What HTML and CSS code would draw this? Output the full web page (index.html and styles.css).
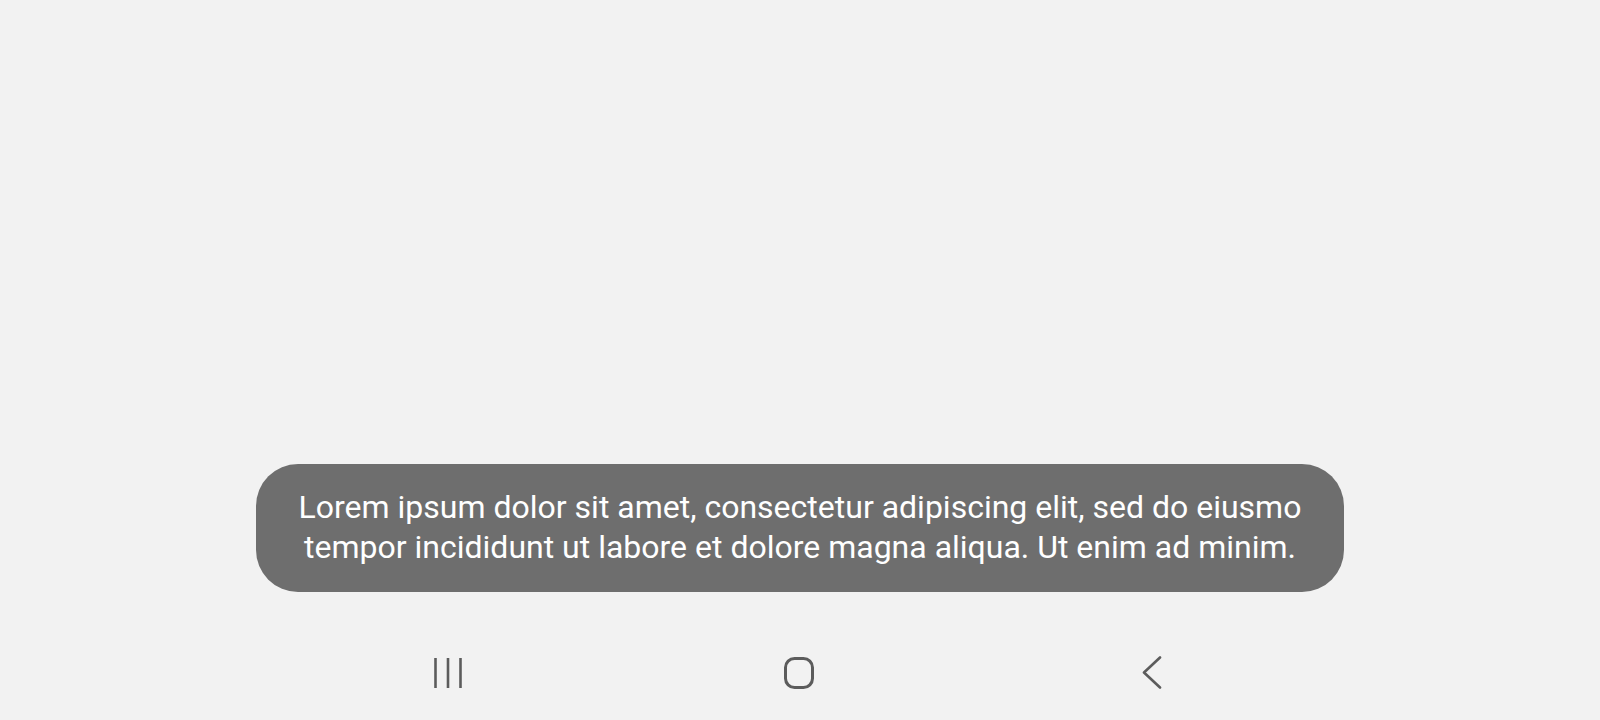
FILE: index.html
```html
<!DOCTYPE html>
<html lang="en">
<head>
<meta charset="utf-8">
<title>Toast</title>
<link rel="stylesheet" href="styles.css">
</head>
<body>
<div class="screen">
  <div class="content"></div>
  <div class="toast">
    <p class="toast-text">Lorem ipsum dolor sit amet, consectetur adipiscing elit, sed do eiusmo<br>tempor incididunt ut labore et dolore magna aliqua. Ut enim ad minim.</p>
  </div>
  <nav class="navbar">
    <div class="nav-cell">
      <svg class="icon" width="28" height="30" viewBox="0 0 28 30" aria-label="Recent apps">
        <line x1="1.5" y1="0" x2="1.5" y2="30"/>
        <line x1="14" y1="0" x2="14" y2="30"/>
        <line x1="26.5" y1="0" x2="26.5" y2="30"/>
      </svg>
    </div>
    <div class="nav-cell">
      <svg class="icon home" width="30" height="32" viewBox="0 0 30 32" aria-label="Home">
        <rect x="1.5" y="1.5" width="27" height="29" rx="9" ry="9"/>
      </svg>
    </div>
    <div class="nav-cell">
      <svg class="icon" width="20" height="33" viewBox="0 0 20 33" aria-label="Back">
        <polyline points="18,1.5 2,16.5 18,31.5"/>
      </svg>
    </div>
  </nav>
</div>
</body>
</html>
```

FILE: styles.css
```css
html, body {
  margin: 0;
  padding: 0;
  background: #f2f2f2;
}

.screen {
  width: 1600px;
  height: 720px;
  display: flex;
  flex-direction: column;
  align-items: center;
  background: #f2f2f2;
}

.content {
  flex: 0 0 464px;
}

.toast {
  width: 1088px;
  box-sizing: border-box;
  background: #6e6e6e;
  border-radius: 42px;
  padding: 23px 20px 25px;
}

.toast-text {
  margin: 0;
  font-family: Roboto, "Noto Sans", sans-serif;
  font-size: 32px;
  line-height: 40px;
  color: #ffffff;
  text-align: center;
  white-space: nowrap;
}

.navbar {
  margin-top: 64px;
  display: grid;
  grid-template-columns: repeat(3, 352px);
  align-items: center;
  height: 33px;
}

.nav-cell {
  display: flex;
  justify-content: center;
  align-items: center;
}

.icon {
  display: block;
  fill: none;
  stroke: #5c5c5c;
  stroke-width: 2.6;
  stroke-linecap: round;
  stroke-linejoin: round;
}

.icon.home {
  stroke-width: 3;
  margin-right: 2px;
}
```
